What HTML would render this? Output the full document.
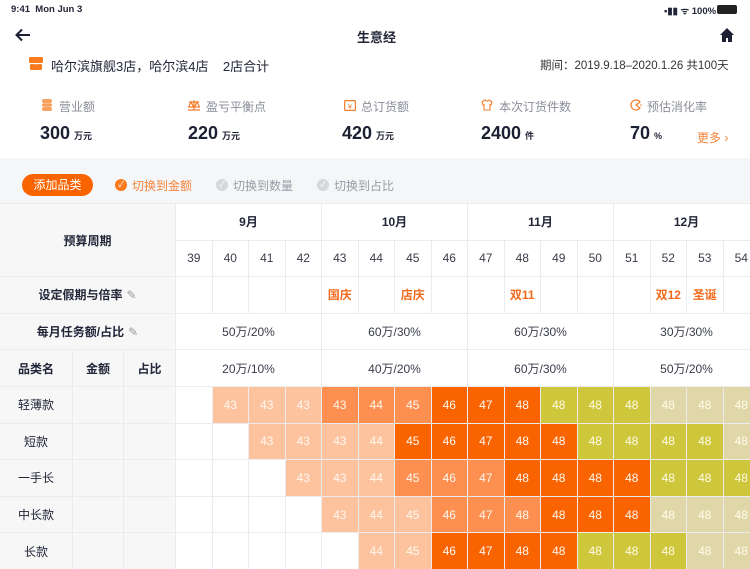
<!DOCTYPE html>
<html><head><meta charset="utf-8"><style>
*{margin:0;padding:0;box-sizing:border-box}
body{width:750px;height:562px;overflow:hidden;background:#fff;font-family:"Liberation Sans","Noto Sans CJK SC",sans-serif;color:#222638;position:relative}
.a{position:absolute;white-space:nowrap}
.lab{font-size:12px;color:#8a8d99;top:98px}
.val{font-size:18px;font-weight:bold;top:123px;color:#1c2033}
.val small{font-size:9px;font-weight:bold;margin-left:4px}
.ic{position:absolute;top:99px;width:12px;height:12px}
#grid{position:absolute;left:0;top:203px;display:grid;grid-template-columns:72px 50px 51px repeat(16,35.5px);grid-template-rows:repeat(10,35.6px);gap:1px;background:#ececee;border-top:1px solid #ececee}
#grid div{background:#fff;display:flex;align-items:center;justify-content:center;font-size:12px;color:#3a3d4a}
#grid .h{background:#f7f7f8;font-weight:bold;color:#222638}
#grid .o{color:#f26b1d;font-weight:bold}
#grid .L{background:#fdc39f;color:#fff7f0}
#grid .M{background:#fd9050;color:#fff7f0}
#grid .D{background:#fa6400;color:#fff7f0}
#grid .G{background:#cec63b;color:#fffbe8}
#grid .B{background:#e0d7a9;color:#fffbe8}
</style></head><body>
<div class="a" style="left:11px;top:4px;font-size:9.5px;font-weight:bold">9:41&nbsp; Mon Jun 3</div>
<div class="a" style="left:664px;top:4px;font-size:9.5px;font-weight:bold">▪▮▮ ᯤ 100%</div>
<div class="a" style="left:717px;top:5px;width:20px;height:9px;background:#222;border-radius:2px"></div>
<svg class="a" style="left:15px;top:28px" width="16" height="14" viewBox="0 0 16 14"><path d="M15 7H2M7 1.5L1.5 7 7 12.5" stroke="#1c2033" stroke-width="2" fill="none"/></svg>
<div class="a" style="left:357px;top:27px;font-size:13px;font-weight:bold">生意经</div>
<svg class="a" style="left:719px;top:27px" width="16" height="16" viewBox="0 0 16 16"><path d="M8 1L1 8h2v7h4v-4h2v4h4V8h2z" fill="#1c2033"/></svg>
<svg class="a" style="left:29px;top:57px" width="14" height="13" viewBox="0 0 14 13"><rect x="0" y="0" width="14" height="6" rx="1.5" fill="#fa7a1e"/><rect x="1" y="7" width="12" height="6" rx="1" fill="#fa7a1e"/><rect x="4" y="6" width="6" height="1.2" fill="#fff"/></svg>
<div class="a" style="left:51px;top:56px;font-size:13px">哈尔滨旗舰3店，哈尔滨4店&nbsp;&nbsp;&nbsp;&nbsp;2店合计</div>
<div class="a" style="left:540px;top:57px;font-size:11.5px;color:#333">期间：2019.9.18–2020.1.26 共100天</div>

<svg class="ic" style="left:41px" viewBox="0 0 12 12"><rect x="1" y="0" width="10" height="4" rx="2" fill="#f7a15e"/><rect x="1" y="4.2" width="10" height="3.6" rx="1.8" fill="#f7a15e"/><rect x="1" y="8" width="10" height="4" rx="2" fill="#f7a15e"/></svg>
<div class="a lab" style="left:59px">营业额</div>
<div class="a val" style="left:40px">300<small>万元</small></div>
<svg class="ic" style="left:188px" viewBox="0 0 12 12"><path d="M6 1V11M1 3H11M3 3L0.5 8H5.5ZM9 3L6.5 8H11.5ZM0 11H12" stroke="#f27d2b" stroke-width="1.2" fill="none"/></svg>
<div class="a lab" style="left:206px">盈亏平衡点</div>
<div class="a val" style="left:188px">220<small>万元</small></div>
<svg class="ic" style="left:344px" viewBox="0 0 12 12"><rect x="0.6" y="1.6" width="10.8" height="9.8" rx="1" stroke="#f27d2b" stroke-width="1.2" fill="none"/><text x="6" y="10" font-size="7" text-anchor="middle" fill="#f27d2b">¥</text></svg>
<div class="a lab" style="left:361px">总订货额</div>
<div class="a val" style="left:342px">420<small>万元</small></div>
<svg class="ic" style="left:481px" viewBox="0 0 12 12"><path d="M4 1L1 3 2 6 3 5.5V11H9V5.5L10 6 11 3 8 1Q6 3 4 1Z" stroke="#f27d2b" stroke-width="1.1" fill="none"/></svg>
<div class="a lab" style="left:499px">本次订货件数</div>
<div class="a val" style="left:481px">2400<small>件</small></div>
<svg class="ic" style="left:630px" viewBox="0 0 12 12"><path d="M10 3A5 5 0 1 0 10 9L6 6Z" stroke="#f27d2b" stroke-width="1.2" fill="none"/><circle cx="11" cy="6" r="0.8" fill="#f27d2b"/></svg>
<div class="a lab" style="left:647px">预估消化率</div>
<div class="a val" style="left:630px">70<small>%</small></div>
<div class="a" style="left:697px;top:129px;font-size:12px;color:#f5833a">更多 ›</div>

<div class="a" style="left:0;top:158px;width:750px;height:46px;background:#f5f6f8"></div>
<div class="a" style="left:22px;top:174px;width:71px;height:22px;border-radius:11px;background:#fa6400;color:#fff;font-size:12px;text-align:center;line-height:22px">添加品类</div>
<div class="a" style="left:115px;top:179px;width:12px;height:12px;border-radius:50%;background:#fa7a1e;color:#fff;font-size:8px;text-align:center;line-height:12px">✓</div>
<div class="a" style="left:132px;top:177px;font-size:12px;color:#f5833a">切换到金额</div>
<div class="a" style="left:216px;top:179px;width:12px;height:12px;border-radius:50%;background:#d6d7db;color:#fff;font-size:8px;text-align:center;line-height:12px">✓</div>
<div class="a" style="left:233px;top:177px;font-size:12px;color:#9a9ca6">切换到数量</div>
<div class="a" style="left:317px;top:179px;width:12px;height:12px;border-radius:50%;background:#d6d7db;color:#fff;font-size:8px;text-align:center;line-height:12px">✓</div>
<div class="a" style="left:334px;top:177px;font-size:12px;color:#9a9ca6">切换到占比</div>

<div id="grid">
<div class="h" style="grid-column:1/4;grid-row:1/3">预算周期</div>
<div class="h" style="grid-column:4/8;background:#fff">9月</div>
<div class="h" style="grid-column:8/12;background:#fff">10月</div>
<div class="h" style="grid-column:12/16;background:#fff">11月</div>
<div class="h" style="grid-column:16/20;background:#fff">12月</div>
<div>39</div><div>40</div><div>41</div><div>42</div><div>43</div><div>44</div><div>45</div><div>46</div><div>47</div><div>48</div><div>49</div><div>50</div><div>51</div><div>52</div><div>53</div><div>54</div>
<div class="h" style="grid-column:1/4">设定假期与倍率 <span style="color:#999;font-weight:normal;margin-left:4px">✎</span></div>
<div></div><div></div><div></div><div></div><div class="o">国庆</div><div></div><div class="o">店庆</div><div></div><div></div><div class="o">双11</div><div></div><div></div><div></div><div class="o">双12</div><div class="o">圣诞</div><div></div>
<div class="h" style="grid-column:1/4">每月任务额/占比 <span style="color:#999;font-weight:normal;margin-left:4px">✎</span></div>
<div style="grid-column:4/8">50万/20%</div><div style="grid-column:8/12">60万/30%</div><div style="grid-column:12/16">60万/30%</div><div style="grid-column:16/20">30万/30%</div>
<div class="h">品类名</div><div class="h">金额</div><div class="h">占比</div>
<div style="grid-column:4/8">20万/10%</div><div style="grid-column:8/12">40万/20%</div><div style="grid-column:12/16">60万/30%</div><div style="grid-column:16/20">50万/20%</div>

<div class="h" style="font-weight:normal">轻薄款</div><div class="h"></div><div class="h"></div>
<div></div><div class="L">43</div><div class="L">43</div><div class="L">43</div><div class="M">43</div><div class="M">44</div><div class="M">45</div><div class="D">46</div><div class="D">47</div><div class="D">48</div><div class="G">48</div><div class="G">48</div><div class="G">48</div><div class="B">48</div><div class="B">48</div><div class="B">48</div>
<div class="h" style="font-weight:normal">短款</div><div class="h"></div><div class="h"></div>
<div></div><div></div><div class="L">43</div><div class="L">43</div><div class="L">43</div><div class="L">44</div><div class="D">45</div><div class="D">46</div><div class="D">47</div><div class="D">48</div><div class="D">48</div><div class="G">48</div><div class="G">48</div><div class="G">48</div><div class="G">48</div><div class="B">48</div>
<div class="h" style="font-weight:normal">一手长</div><div class="h"></div><div class="h"></div>
<div></div><div></div><div></div><div class="L">43</div><div class="L">43</div><div class="L">44</div><div class="M">45</div><div class="M">46</div><div class="M">47</div><div class="D">48</div><div class="D">48</div><div class="D">48</div><div class="D">48</div><div class="G">48</div><div class="G">48</div><div class="G">48</div>
<div class="h" style="font-weight:normal">中长款</div><div class="h"></div><div class="h"></div>
<div></div><div></div><div></div><div></div><div class="L">43</div><div class="L">44</div><div class="L">45</div><div class="M">46</div><div class="M">47</div><div class="M">48</div><div class="D">48</div><div class="D">48</div><div class="D">48</div><div class="B">48</div><div class="B">48</div><div class="B">48</div>
<div class="h" style="font-weight:normal">长款</div><div class="h"></div><div class="h"></div>
<div></div><div></div><div></div><div></div><div></div><div class="L">44</div><div class="L">45</div><div class="D">46</div><div class="D">47</div><div class="D">48</div><div class="D">48</div><div class="G">48</div><div class="G">48</div><div class="G">48</div><div class="B">48</div><div class="B">48</div>
</div>
</body></html>
